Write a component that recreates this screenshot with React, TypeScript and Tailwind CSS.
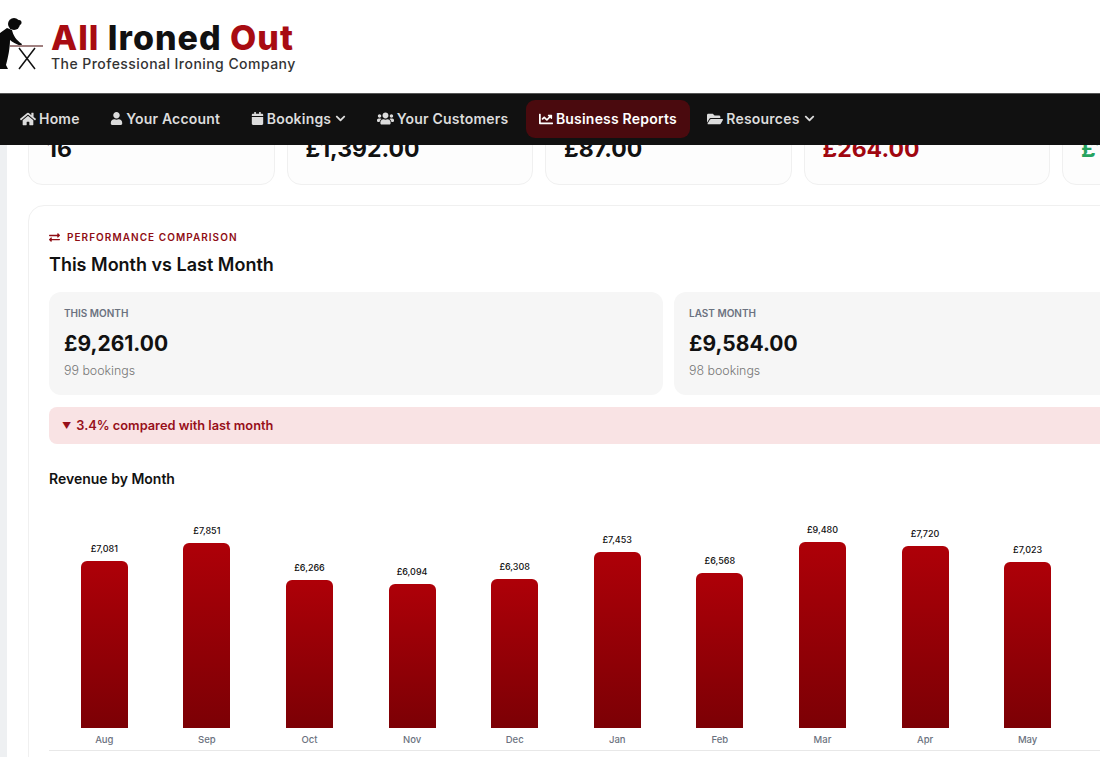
import { FaHome, FaUser, FaCalendar, FaUsers, FaChartLine, FaFolderOpen, FaChevronDown, FaExchangeAlt } from "react-icons/fa";
import type { IconType } from "react-icons";

const navItems: { label: string; icon: IconType; size: number; active?: boolean }[] = [
  { label: "Home", icon: FaHome, size: 16 },
  { label: "Your Account", icon: FaUser, size: 13 },
  { label: "Bookings", icon: FaCalendar, size: 13 },
  { label: "Your Customers", icon: FaUsers, size: 17 },
  { label: "Business Reports", icon: FaChartLine, size: 14, active: true },
  { label: "Resources", icon: FaFolderOpen, size: 16 },
];

const stats = [
  { value: "16", color: "text-[#111111]" },
  { value: "£1,392.00", color: "text-[#111111]" },
  { value: "£87.00", color: "text-[#111111]" },
  { value: "£264.00", color: "text-[#a00610]" },
  { value: "£1,128.00", color: "text-[#27a35f]" },
];

const months = [
  { month: "Aug", amount: "£7,081", height: 167 },
  { month: "Sep", amount: "£7,851", height: 185 },
  { month: "Oct", amount: "£6,266", height: 148 },
  { month: "Nov", amount: "£6,094", height: 144 },
  { month: "Dec", amount: "£6,308", height: 149 },
  { month: "Jan", amount: "£7,453", height: 176 },
  { month: "Feb", amount: "£6,568", height: 155 },
  { month: "Mar", amount: "£9,480", height: 186 },
  { month: "Apr", amount: "£7,720", height: 182 },
  { month: "May", amount: "£7,023", height: 166 },
];

function Logo() {
  return (
    <div className="flex items-center h-[93px]">
      <svg width="46" height="52" viewBox="0 0 46 52" className="-mt-[5px] shrink-0">
        <circle cx="14" cy="6" r="6" fill="#0a0a0a" />
        <circle cx="19" cy="4.5" r="2.5" fill="#0a0a0a" />
        <path
          d="M0 15 L7 10 L12 12 C13 17 16 22 22 26 L21 28 C16 26 12 24 10 22 C10 30 8 40 6 47 L8 51 L0 51 Z"
          fill="#0a0a0a"
        />
        <path d="M10 28 H43" stroke="#a08080" strokeWidth="1.8" />
        <path d="M19 30 L35 51 M35 30 L19 51" stroke="#111111" strokeWidth="1.5" fill="none" />
      </svg>
      <div className="ml-[5px] -mt-[1px]">
        <div className="text-[34px] leading-[36px] font-extrabold tracking-[1px] whitespace-nowrap text-[#111111]">
          <span className="text-[#a80c12]">All</span> Ironed <span className="text-[#a80c12]">Out</span>
        </div>
        <div className="text-[14px] leading-[16px] font-medium tracking-[0.45px] text-[#333333] whitespace-nowrap">
          The Professional Ironing Company
        </div>
      </div>
    </div>
  );
}

function NavBar() {
  return (
    <nav className="relative z-10 flex items-center gap-[4.5px] h-[52px] pl-[7px] pb-[2px] bg-[#111111] border-t border-[#555555]">
      {navItems.map((item) => {
        const Icon = item.icon;
        return (
          <div
            key={item.label}
            className={`flex items-center gap-[3px] h-[38px] px-[13px] rounded-[9px] text-[14px] tracking-[0.2px] font-semibold whitespace-nowrap ${
              item.active ? "bg-[#4a0a0e] text-white" : "text-[#dcdcdc]"
            }`}
          >
            <Icon size={item.size} />
            <span>{item.label}</span>
            {item.label === "Bookings" || item.label === "Resources" ? (
              <FaChevronDown size={11} className="ml-[1px]" />
            ) : null}
          </div>
        );
      })}
    </nav>
  );
}

function MonthBox({ label, total, bookings }: { label: string; total: string; bookings: string }) {
  return (
    <div className="h-[103px] w-[614px] shrink-0 rounded-[12px] bg-[#f6f6f6] px-[15px] pt-[14px]">
      <div className="text-[10px] leading-[14px] font-semibold text-[#6b7280]">{label}</div>
      <div className="mt-[10px] text-[21px] leading-[28px] font-bold text-[#111111]">{total}</div>
      <div className="mt-[5px] text-[12.4px] leading-[16px] font-light text-[#777777]">{bookings}</div>
    </div>
  );
}

export default function App() {
  return (
    <div
      className="h-screen w-full overflow-hidden bg-white"
      style={{ fontFamily: "Inter, 'Open Sans', sans-serif" }}
    >
      <Logo />
      <NavBar />
      <div className="flex h-[612px]">
        <div className="w-[7px] shrink-0 bg-[#eef0f2]" />
        <div className="pl-[21px] w-[1400px] shrink-0">
          <div className="flex gap-[12px] -mt-[30px]">
            {stats.map((s) => (
              <div
                key={s.value}
                className="h-[70px] w-[246.5px] shrink-0 rounded-[14px] border border-[#f0f0f0] bg-[#fdfdfd] px-[18px] pt-[19px]"
              >
                <div className={`text-[23px] leading-[28px] font-bold ${s.color}`}>{s.value}</div>
              </div>
            ))}
          </div>

          <section className="mt-[20px] w-[1300px] rounded-[16px] border border-[#f0f0f0] bg-white px-[20px] pt-[25px] pb-[40px]">
            <div className="flex items-center gap-[7px] text-[10px] leading-[12px] font-semibold tracking-[1.05px] text-[#8f0d14]">
              <FaExchangeAlt size={11} />
              <span>PERFORMANCE COMPARISON</span>
            </div>
            <h2 className="mt-[10px] text-[18px] leading-[24px] font-semibold text-[#111111]">This Month vs Last Month</h2>

            <div className="mt-[15px] flex gap-[11px]">
              <MonthBox label="THIS MONTH" total="£9,261.00" bookings="99 bookings" />
              <MonthBox label="LAST MONTH" total="£9,584.00" bookings="98 bookings" />
            </div>

            <div className="mt-[12px] flex h-[37px] items-center gap-[5px] rounded-[8px] bg-[#f9e3e4] px-[13px] text-[12.8px] font-semibold text-[#97101a]">
              <span className="text-[9px]">▼</span>
              <span>3.4% compared with last month</span>
            </div>

            <h3 className="mt-[26px] text-[14px] leading-[18px] font-semibold text-[#111111]">Revenue by Month</h3>

            <div className="mt-[20px] flex h-[243px] items-end border-b border-[#e8e8e8] pl-[4px]">
              {months.map((m) => (
                <div key={m.month} className="flex w-[102.6px] shrink-0 flex-col items-center">
                  <div className="mb-[6px] text-[9px] leading-[12px] font-medium text-[#111111]">{m.amount}</div>
                  <div
                    className="w-[47px] rounded-t-[6px] bg-linear-to-b from-[#ae0008] to-[#7c0005]"
                    style={{ height: m.height }}
                  />
                  <div className="mt-[6px] mb-[5px] text-[9.5px] leading-[11px] font-medium text-[#6b7280]">{m.month}</div>
                </div>
              ))}
            </div>
          </section>
        </div>
      </div>
    </div>
  );
}
